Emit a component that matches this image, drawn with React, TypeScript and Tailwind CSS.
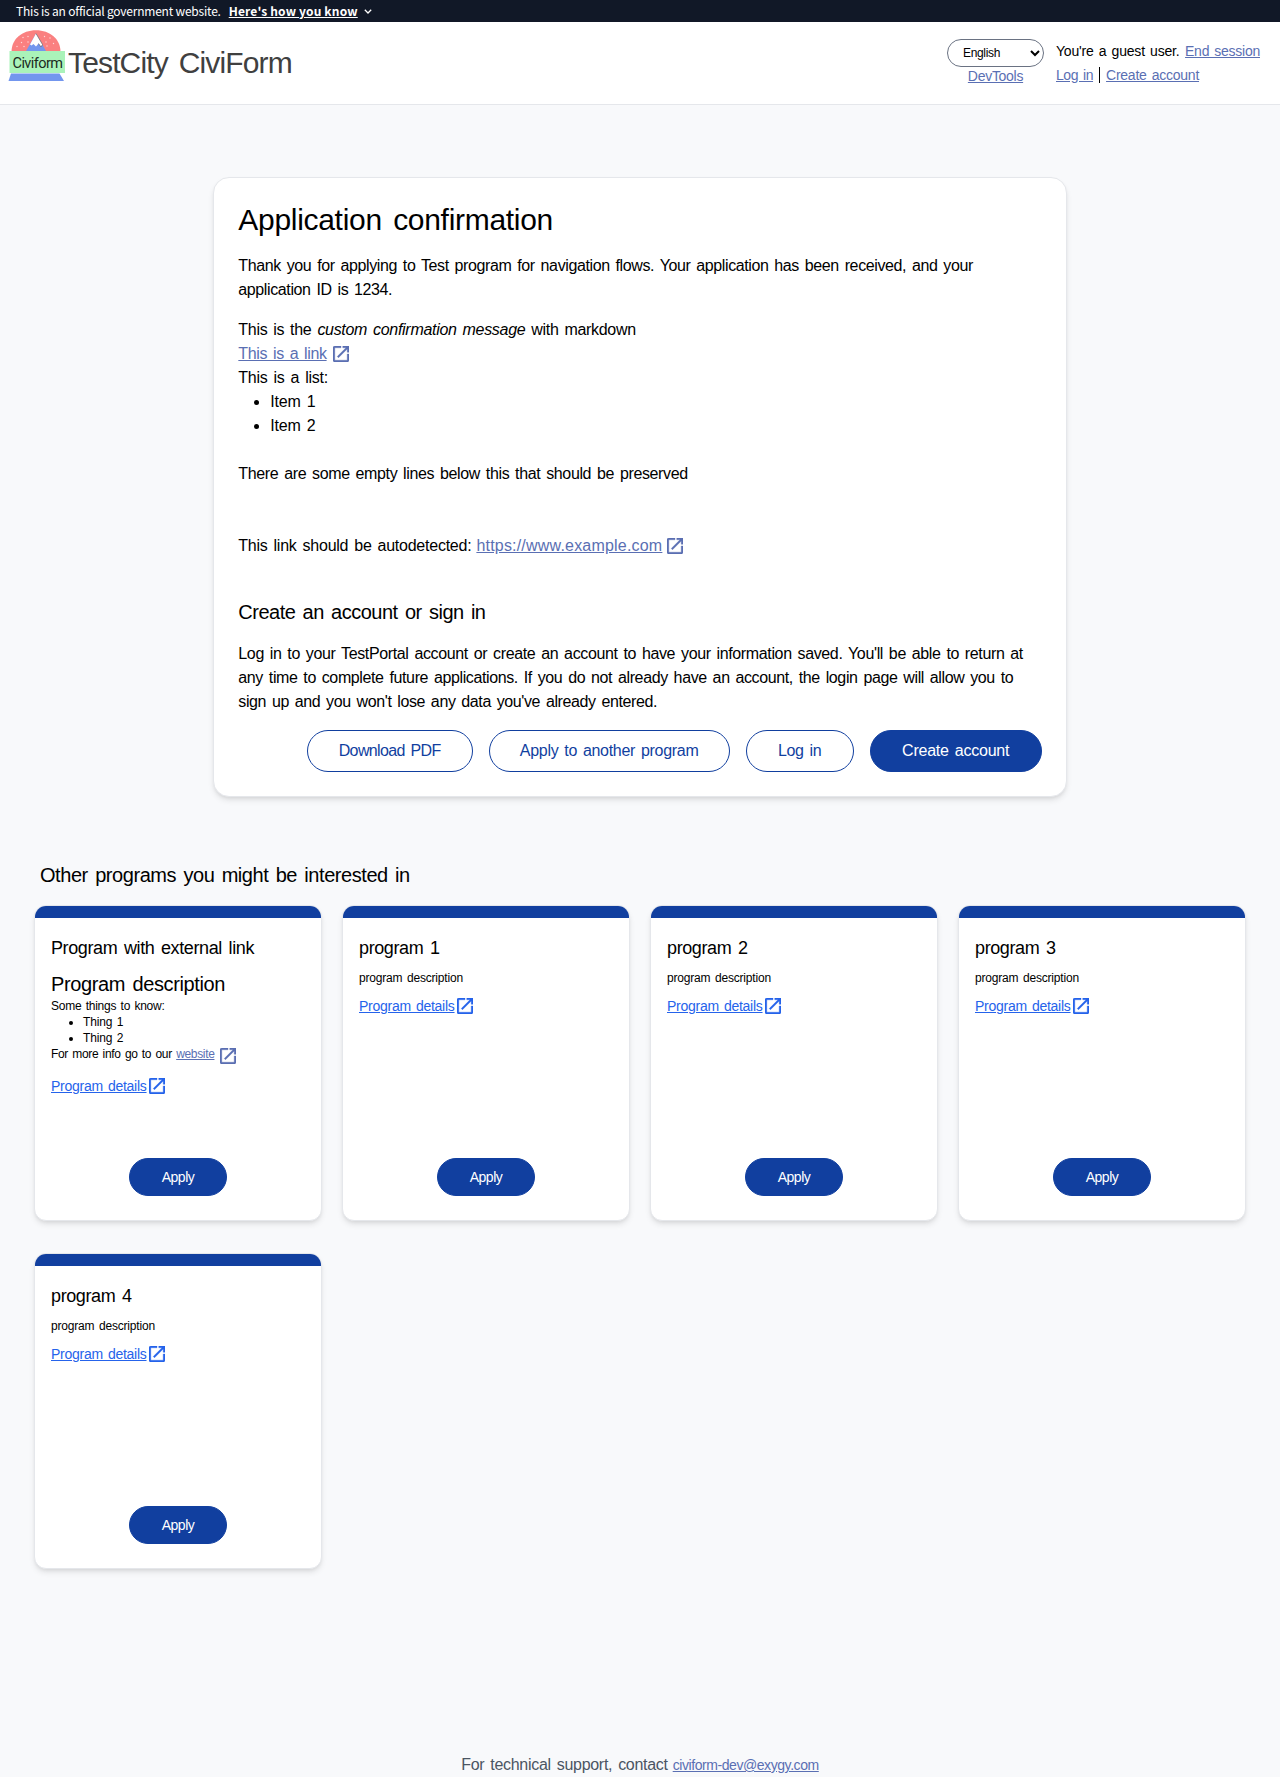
import type { ReactNode } from "react";

function OpenInNew({ className = "" }: { className?: string }) {
  return (
    <svg
      viewBox="3 3 18 18"
      className={`h-4 w-4 shrink-0 ${className}`}
      fill="currentColor"
      stroke="currentColor"
      strokeWidth="0.4"
      aria-hidden="true"
    >
      <path d="M19 19H5V5h7V3H5c-1.11 0-2 .9-2 2v14c0 1.1.89 2 2 2h14c1.1 0 2-.9 2-2v-7h-2v7zM14 3v2h3.59l-9.83 9.83 1.41 1.41L19 6.41V10h2V3h-7z" />
    </svg>
  );
}

function Link({ children, className = "" }: { children: ReactNode; className?: string }) {
  return (
    <a href="#" className={`text-[#5a6fb3] underline ${className}`}>
      {children}
    </a>
  );
}

function Logo() {
  return (
    <svg width="57" height="52" viewBox="0 0 57 52" className="block" aria-hidden="true">
      <path d="M3.5 22C3.5 9 14 .3 28 .3S52.500 9 52.500 22z" fill="#fa8080" />
      <g fill="#fff" opacity="0.7">
        <circle cx="15" cy="7.500" r="0.7" />
        <circle cx="20" cy="6.500" r="0.7" />
        <circle cx="13.500" cy="12.500" r="0.7" />
        <circle cx="20" cy="12" r="0.7" />
        <circle cx="9" cy="16.500" r="0.7" />
        <circle cx="16" cy="16.500" r="0.7" />
        <circle cx="36.500" cy="6.500" r="0.7" />
        <circle cx="42" cy="8" r="0.7" />
        <circle cx="38" cy="12" r="0.7" />
        <circle cx="45.500" cy="13.500" r="0.7" />
        <circle cx="39" cy="16" r="0.7" />
      </g>
      <path d="M28 3.500 38.500 22h-21z" fill="#7396ee" />
      <path d="M28 3.500 34.500 14.500 33 17l-2.500-3.500-2.500 3-2.500-2.500-2 1.500-1.500-1z" fill="#fff" />
      <path d="M28 3.500 34.500 14.500 33 17l-2.500-3.500" fill="none" stroke="#555" strokeWidth="0.6" />
      <path d="M3 43.500h48.500l4.500 7.500H.5z" fill="#7396ee" />
      <rect x="1.500" y="21" width="55.500" height="22" fill="#aaf3b9" />
      <text x="4.500" y="38" fontSize="14.500" textLength="50.500" fill="#1c2a1f" fontFamily="Roboto, sans-serif">
        Civiform
      </text>
    </svg>
  );
}

const buttonBase = "flex items-center justify-center rounded-full border border-[#113f9f]";

type Program = { title: string; rich?: boolean };

const programs: Program[] = [
  { title: "Program with external link", rich: true },
  { title: "program 1" },
  { title: "program 2" },
  { title: "program 3" },
  { title: "program 4" },
];

function ProgramCard({ title, rich }: Program) {
  return (
    <li className="flex h-[316px] w-72 flex-col overflow-hidden rounded-xl border border-gray-200 bg-white shadow-md">
      <div className="h-3 shrink-0 bg-[#113f9f]" />
      <div className="flex grow flex-col p-4">
        <h3 className="text-lg leading-7 tracking-[-0.385px]">{title}</h3>
        {rich ? (
          <div className="mt-2 text-xs">
            <h4 className="text-xl leading-7 tracking-[-0.38px]">Program description</h4>
            <p className="tracking-[-0.26px]">Some things to know:</p>
            <ul className="list-disc pl-8 tracking-[-0.15px]">
              <li>Thing 1</li>
              <li>Thing 2</li>
            </ul>
            <p className="flex h-5 tracking-[-0.34px]">
              <span>
                For more info go to our <Link>website</Link>
              </span>
              <OpenInNew className="mt-[2px] ml-[6px] text-[#5a6fb3]" />
            </p>
          </div>
        ) : (
          <p className="mt-2 text-xs tracking-[-0.18px]">program description</p>
        )}
        <a href="#" className="mt-2 flex h-6 items-center text-sm tracking-[-0.27px] text-[#2563eb]">
          <span className="underline">Program details</span>
          <OpenInNew className="ml-[2.500px]" />
        </a>
      </div>
      <div className="mb-6 flex justify-center">
        <button className={`${buttonBase} h-[38px] w-[98px] bg-[#113f9f] text-sm tracking-[-0.5px] text-white`}>
          Apply
        </button>
      </div>
    </li>
  );
}

export default function App() {
  return (
    <div className="flex h-[1777px] w-[1280px] flex-col overflow-hidden bg-[#f8f9fb] font-['Liberation_Sans',Arial,sans-serif] text-base text-black">
      <div className="flex h-[22px] shrink-0 items-center bg-[#111827] pl-4 font-['Noto_Sans_CJK_SC',sans-serif] text-xs text-white">
        <span className="tracking-[-0.21px]">This is an official government website.</span>
        <button className="ml-2 flex items-center">
          <span className="font-bold tracking-[0.16px] underline">Here's how you know</span>
          <svg width="8" height="5" viewBox="0 0 8 5" className="ml-[6px]" fill="none" stroke="white" strokeWidth="1.300">
            <path d="M.8.8 4 4 7.200.8" />
          </svg>
        </button>
      </div>

      <header className="flex h-[83px] shrink-0 justify-between border-b border-gray-200 bg-white [&_*]:[word-spacing:0.11em]">
        <a href="#" className="flex pl-2">
          <span className="mt-2">
            <Logo />
          </span>
          <span className="mt-[23px] ml-[3px] text-3xl leading-9 tracking-[-0.85px] text-[#404040]">TestCity CiviForm</span>
        </a>
        <div className="flex pt-[17px]">
          <div className="flex flex-col items-center">
            <select className="h-7 w-[97px] rounded-full border border-gray-500 bg-white pl-[11px] text-xs tracking-[-0.34px]">
              <option>English</option>
            </select>
            <Link className="text-sm leading-[18px] tracking-[-0.29px]">DevTools</Link>
          </div>
          <div className="mr-5 ml-3 w-[204px] text-sm leading-6">
            <div className="flex justify-between">
              <span className="tracking-[-0.2px]">You're a guest user.</span>
              <Link className="tracking-[-0.26px]">End session</Link>
            </div>
            <div className="flex items-center">
              <Link className="tracking-[-0.44px]">Log in</Link>
              <span className="mx-[6px] h-4 w-px bg-black" />
              <Link className="tracking-[-0.25px]">Create account</Link>
            </div>
          </div>
        </div>
      </header>

      <main className="flex grow flex-col [&_*]:[word-spacing:0.11em]">
        <section className="mx-auto mt-[72px] h-[620px] w-2/3 shrink-0 rounded-2xl border border-gray-200 bg-white p-6 shadow-md">
          <h1 className="text-3xl leading-9 tracking-[-0.3px]">Application confirmation</h1>
          <p className="mt-4 tracking-[-0.385px]">
            Thank you for applying to Test program for navigation flows. Your application has been received, and your
            <br />
            application ID is 1234.
          </p>
          <div className="mt-4">
            <p className="tracking-[-0.3px]">
              This is the <em>custom confirmation message</em> with markdown
            </p>
            <p className="flex items-center">
              <Link className="tracking-[-0.36px]">This is a link</Link>
              <OpenInNew className="ml-[6px] text-[#5a6fb3]" />
            </p>
            <p className="tracking-[-0.24px]">This is a list:</p>
            <ul className="list-disc pl-8 tracking-[-0.2px]">
              <li>Item 1</li>
              <li>Item 2</li>
            </ul>
            <p className="mt-6 tracking-[-0.365px]">There are some empty lines below this that should be preserved</p>
            <p className="mt-12 flex items-center">
              <span className="tracking-[-0.24px]">This link should be autodetected:</span>
              <Link className="ml-[5px] tracking-[0.2px]">https://www.example.com</Link>
              <OpenInNew className="ml-[5px] text-[#5a6fb3]" />
            </p>
          </div>
          <h2 className="mt-10 text-xl leading-7 tracking-[-0.5px]">Create an account or sign in</h2>
          <p className="mt-4 tracking-[-0.363px]">
            Log in to your TestPortal account or create an account to have your information saved. You'll be able to return at
            <br />
            <span className="tracking-[-0.38px]">
              any time to complete future applications. If you do not already have an account, the login page will allow you to
            </span>
            <br />
            <span className="tracking-[-0.39px]">sign up and you won't lose any data you've already entered.</span>
          </p>
          <div className="mt-4 flex justify-end gap-4 text-[#113f9f]">
            <button className={`${buttonBase} h-[42px] w-[166px] tracking-[-0.62px]`}>Download PDF</button>
            <button className={`${buttonBase} h-[42px] w-[241px] tracking-[-0.3px]`}>Apply to another program</button>
            <button className={`${buttonBase} h-[42px] w-[108px] tracking-[-0.35px]`}>Log in</button>
            <button className={`${buttonBase} h-[42px] w-[172px] bg-[#113f9f] tracking-[-0.22px] text-white`}>
              Create account
            </button>
          </div>
        </section>

        <section className="mt-16 px-[34px]">
          <h2 className="ml-[6px] text-xl leading-7 tracking-[-0.44px]">Other programs you might be interested in</h2>
          <ul className="mt-4 grid grid-cols-[repeat(4,288px)] gap-x-5 gap-y-8">
            {programs.map((p) => (
              <ProgramCard key={p.title} {...p} />
            ))}
          </ul>
        </section>
      </main>

      <footer className="flex h-6 shrink-0 items-center justify-center text-[#4b5563] [word-spacing:0.11em]">
        <span className="tracking-[-0.29px]">For technical support, contact</span>
        <Link className="ml-[5px] text-sm tracking-[-0.43px]">civiform-dev@exygy.com</Link>
      </footer>
    </div>
  );
}
